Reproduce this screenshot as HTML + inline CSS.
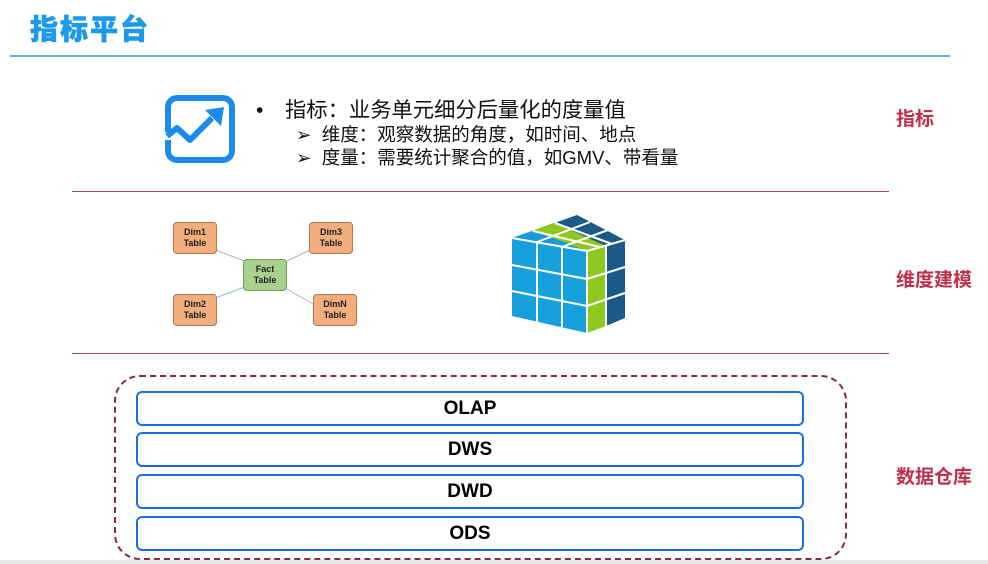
<!DOCTYPE html>
<html><head><meta charset="utf-8"><style>
body{margin:0;width:988px;height:564px;background:#fff;position:relative;overflow:hidden;font-family:"Liberation Sans","Noto Sans CJK SC",sans-serif}
.a{position:absolute}
.title{left:30px;top:8px;font-size:28px;font-weight:900;color:#1a9ae8;letter-spacing:2px;-webkit-text-stroke:0.6px #1a9ae8}
.hr{left:10px;top:55px;width:940px;height:2px;background:#6fb3cf}
.red{left:72px;width:817px;height:1px;background:#a84858}
.lab{color:#c0304a;font-size:19px;font-weight:bold}
.t{color:#111;line-height:23px;white-space:nowrap}
.box{left:136px;width:664px;height:31px;border:2px solid #1a6fe0;border-radius:6px;text-align:center;line-height:31px;font-weight:bold;font-size:19px;color:#000}
.n{position:absolute;background:#f3ae7e;border:1px solid #b07850;border-radius:4px;font-size:9px;font-weight:bold;text-align:center;line-height:11px;padding-top:4px;width:42px;height:26px;color:#222}
</style></head><body>
<div class="a title">指标平台</div>
<div class="a hr"></div>
<svg class="a" style="left:164px;top:94px" width="72" height="70" viewBox="0 0 72 70"><rect x="4" y="4" width="64" height="62" rx="9" fill="none" stroke="#1a8cf0" stroke-width="6"/><rect x="0" y="38" width="8" height="8" fill="#fff"/><polyline points="3,42 13,34 26,46 48,24" fill="none" stroke="#1a8cf0" stroke-width="6" stroke-linejoin="round"/><polygon points="41,16 60,13 57,32" fill="#1a8cf0"/></svg>
<div class="a t" style="left:256px;top:99px;font-size:21px">•</div>
<div class="a t" style="left:285px;top:99px;font-size:21.3px">指标：业务单元细分后量化的度量值</div>
<div class="a t" style="left:296px;top:123px;font-size:18.5px">➢&nbsp;&nbsp;维度：观察数据的角度，如时间、地点</div>
<div class="a t" style="left:296px;top:146px;font-size:18.5px">➢&nbsp;&nbsp;度量：需要统计聚合的值，如GMV、带看量</div>
<div class="a lab" style="left:896px;top:104px">指标</div>
<div class="a red" style="top:191px"></div>
<svg class="a" style="left:0;top:0" width="988" height="564"><g stroke="#9fb0d8" stroke-width="1"><line x1="210" y1="248" x2="250" y2="263"/><line x1="310" y1="250" x2="285" y2="262"/><line x1="210" y1="300" x2="250" y2="285"/><line x1="315" y1="305" x2="285" y2="288"/></g></svg>
<div class="n" style="left:173px;top:222px">Dim1<br>Table</div>
<div class="n" style="left:309px;top:222px">Dim3<br>Table</div>
<div class="n" style="left:243px;top:259px;background:#a9d18e;border-color:#7a9a60">Fact<br>Table</div>
<div class="n" style="left:173px;top:294px">Dim2<br>Table</div>
<div class="n" style="left:313px;top:294px">DimN<br>Table</div>
<svg class="a" style="left:505px;top:205px" width="130" height="135" viewBox="505 205 130 135">
<polygon points="512,238 577,215 625,240 587,251" fill="#1b5a88"/>
<polygon points="512,238 555,223 606,246 587,251" fill="#8cc81e"/>
<polygon points="512,238 533,231 587,251 587,251" fill="#1a9ad8"/>
<polygon points="512,238 533,231 570,244 549,244" fill="#1a9ad8"/>
<polygon points="512,238 587,251 587,333 512,316" fill="#16a0dc"/>
<polygon points="587,251 606,246 606,326 587,333" fill="#8cc81e"/>
<polygon points="606,246 625,240 625,318 606,326" fill="#1b5a88"/>
<g stroke="#fff" stroke-width="2" fill="none">
<line x1="537" y1="242" x2="537" y2="322"/><line x1="562" y1="247" x2="562" y2="327"/>
<line x1="512" y1="265" x2="587" y2="279"/><line x1="512" y1="291" x2="587" y2="306"/>
<line x1="587" y1="279" x2="625" y2="267"/><line x1="587" y1="306" x2="625" y2="293"/>
<line x1="606" y1="246" x2="606" y2="326"/><line x1="587" y1="251" x2="587" y2="333"/>
<line x1="512" y1="238" x2="587" y2="251"/><line x1="587" y1="251" x2="625" y2="240"/>
<line x1="533" y1="231" x2="600" y2="247"/><line x1="555" y1="223" x2="612" y2="244"/>
<line x1="537" y1="242" x2="590" y2="222"/><line x1="562" y1="247" x2="608" y2="230"/>
</g></svg>
<div class="a lab" style="left:896px;top:265px">维度建模</div>
<div class="a red" style="top:353px"></div>
<div class="a" style="left:114px;top:375px;width:729px;height:181px;border:2px dashed #8a2a3c;border-radius:26px"></div>
<div class="a box" style="top:391px">OLAP</div>
<div class="a box" style="top:432px">DWS</div>
<div class="a box" style="top:474px">DWD</div>
<div class="a box" style="top:516px">ODS</div>
<div class="a lab" style="left:896px;top:462px">数据仓库</div>
<div class="a" style="left:0;top:560px;width:988px;height:4px;background:#e6e6e6"></div>
</body></html>
